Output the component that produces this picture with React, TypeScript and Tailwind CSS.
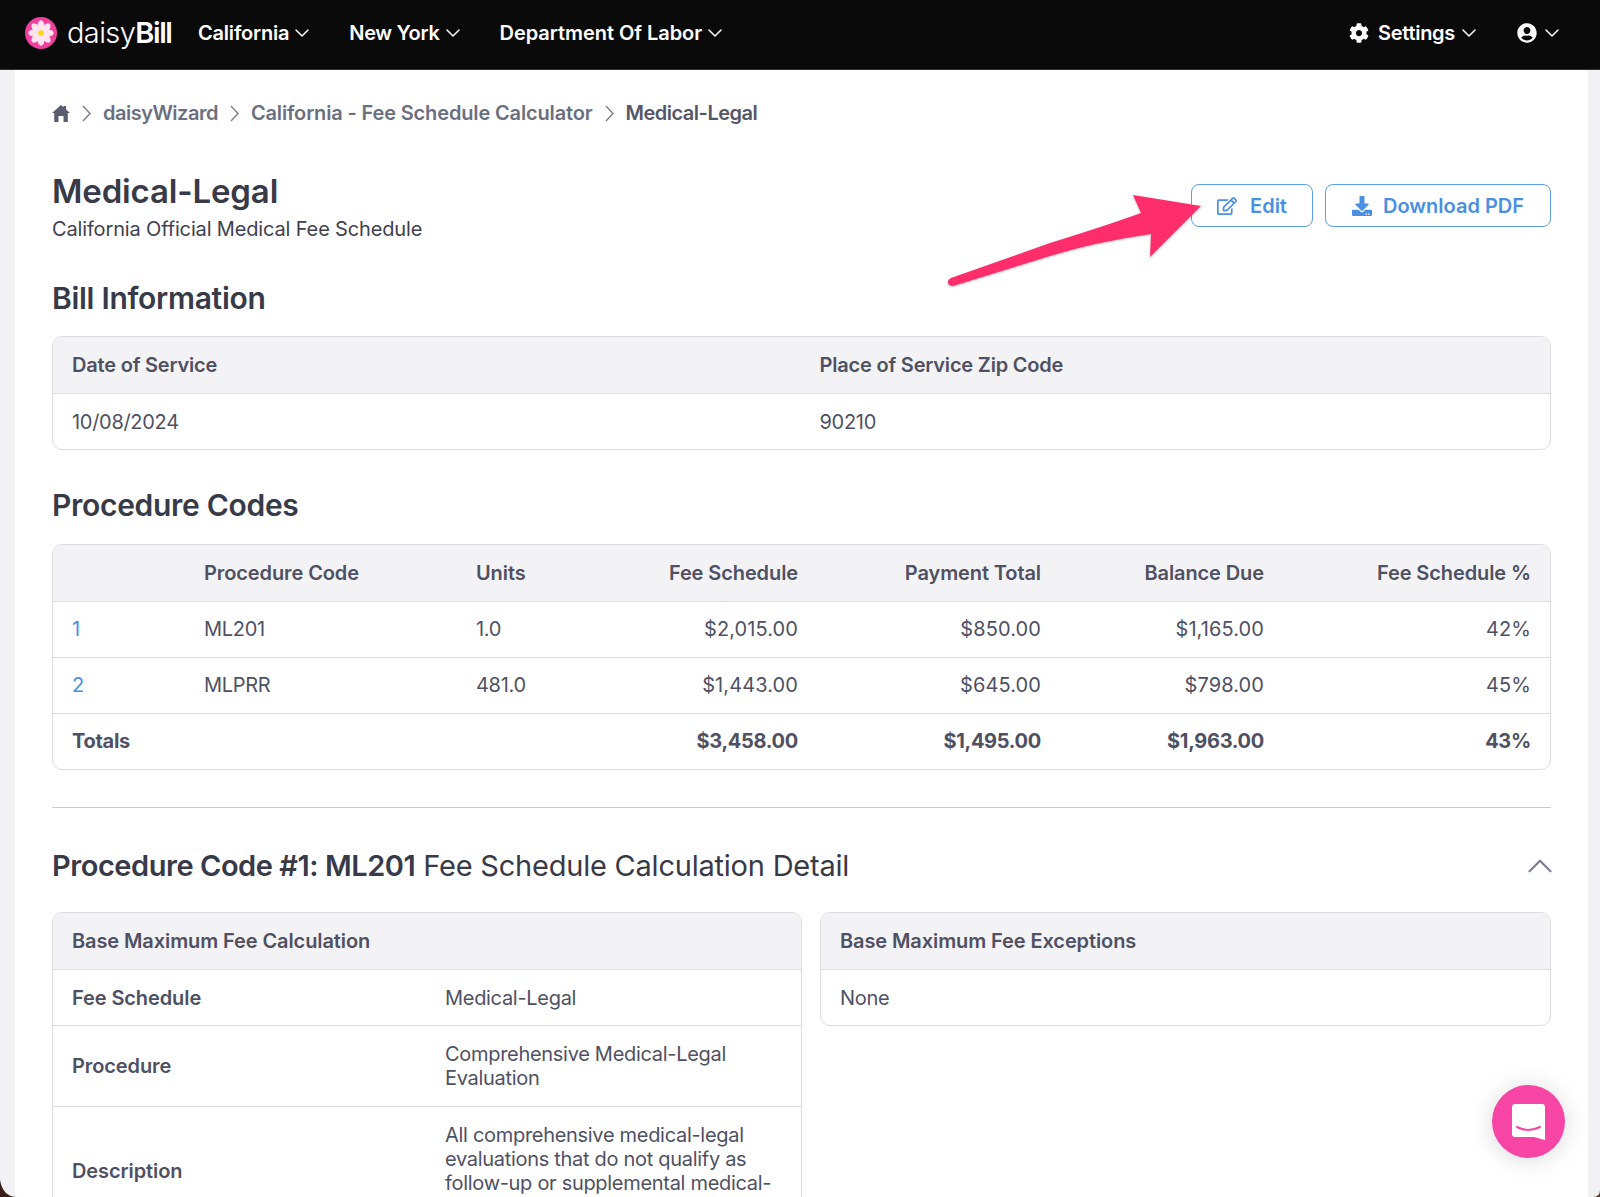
import React from "react";
import { ChevronDown, ChevronUp } from "lucide-react";
import { FaCog, FaUserCircle, FaRegEdit, FaDownload } from "react-icons/fa";

const Nav = ({ label, track }: { label: string; track: string }) => (
  <div className="flex items-center gap-[1px]">
    <span className={`text-[20px] font-semibold text-white ${track}`}>{label}</span>
    <ChevronDown size={24} className="text-white" strokeWidth={1.5} />
  </div>
);

const Sep = () => (
  <svg width="9" height="17" viewBox="0 0 9 17" className="mx-[12px] text-[#7b7f8e]" fill="none" stroke="currentColor" strokeWidth="1.4">
    <path d="M1 1l7 7.5-7 7.5" />
  </svg>
);

const Logo = () => (
  <svg width="32" height="32" viewBox="0 0 34 34">
    <circle cx="17" cy="17" r="17" fill="#f0409e" />
    {[0, 45, 90, 135, 180, 225, 270, 315].map((a) => (
      <ellipse key={a} cx="17" cy="9.5" rx="3.6" ry="6" fill="#fde4ee" transform={`rotate(${a} 17 17)`} />
    ))}
    <circle cx="17" cy="17" r="3" fill="#fbd914" />
  </svg>
);

const th = "px-[19px] h-[56px] font-semibold text-left align-middle tracking-[-0.1px]";
const td = "px-[19px] h-[56px] align-middle border-t border-[#dcdde3]";
const num = "tracking-[0.1px]";

const Card = ({ children }: { children: React.ReactNode }) => (
  <div className="border border-[#dcdde3] rounded-[10px] overflow-hidden bg-white">{children}</div>
);

const procRows = [
  ["1", "ML201", "1.0", "$2,015.00", "$850.00", "$1,165.00", "42%"],
  ["2", "MLPRR", "481.0", "$1,443.00", "$645.00", "$798.00", "45%"],
];

export default function App() {
  return (
    <div className="h-[1197px] overflow-hidden bg-[#f2f2f5] text-[#4f5163] text-[20px] leading-[24px] [font-family:Inter,sans-serif] tracking-[-0.3px] relative">
      <header className="h-[70px] bg-[#0a0a0a] border-b border-[#333] flex items-center pl-[25px] pr-[36px] pb-[3px]">
        <Logo />
        <div className="ml-[10px] w-[104px] text-[29px] leading-[36px] text-white font-light tracking-[-0.6px] whitespace-nowrap">
          daisy<span className="font-semibold tracking-[-1.4px]">Bill</span>
        </div>
        <div className="ml-[27px] flex items-center gap-[35px]">
          <Nav label="California" track="tracking-[-0.2px]" />
          <Nav label="New York" track="tracking-[-0.3px]" />
          <Nav label="Department Of Labor" track="tracking-[-0.05px]" />
        </div>
        <div className="ml-auto flex items-center gap-[36px]">
          <div className="flex items-center">
            <FaCog size={20} className="text-white mr-[9px]" />
            <span className="text-[20px] font-semibold text-white mr-[2px]">Settings</span>
            <ChevronDown size={24} className="text-white" strokeWidth={1.5} />
          </div>
          <div className="flex items-center gap-[3px]">
            <FaUserCircle size={20} className="text-white" />
            <ChevronDown size={24} className="text-white" strokeWidth={1.5} />
          </div>
        </div>
      </header>

      <main className="ml-[15px] mr-[12px] h-[1127px] bg-white px-[37px] overflow-hidden">
        <nav className="pt-[31px] h-[75px] flex items-start text-[#6b6f80] font-semibold">
          <div className="h-[24px] flex items-center">
            <svg width="18" height="17" viewBox="0 0 18 17" className="text-[#5a5d70]" fill="currentColor">
              <path d="M9 0l2.5 2.2V1H14v3.5L18 8h-2.2v9h-4.3v-6h-5v6H2.2V8H0z" />
            </svg>
            <Sep />
          </div>
          <span className="tracking-[-0.5px]">daisyWizard</span>
          <div className="h-[24px] flex items-center"><Sep /></div>
          <span className="tracking-[-0.15px]">California - Fee Schedule Calculator</span>
          <div className="h-[24px] flex items-center"><Sep /></div>
          <span className="text-[#555769] tracking-[-0.5px]">Medical-Legal</span>
        </nav>

        <div className="flex items-start justify-between h-[135px]">
          <div>
            <h1 className="mt-[26px] text-[33px] leading-[40px] font-semibold text-[#383a48] tracking-[-0.15px]">Medical-Legal</h1>
            <p className="text-[#3f4150] mt-[6px] tracking-[-0.15px]">California Official Medical Fee Schedule</p>
          </div>
          <div className="flex gap-[12px] mt-[39px] tracking-normal">
            <button className="h-[43px] w-[122px] border border-[#5b9fe6] rounded-[8px] text-[#4a90e2] font-semibold flex items-center justify-center gap-[13px]">
              <FaRegEdit size={20} />
              Edit
            </button>
            <button className="h-[43px] w-[226px] border border-[#5b9fe6] rounded-[8px] text-[#4a90e2] font-semibold flex items-center justify-center gap-[11px]">
              <FaDownload size={20} />
              Download PDF
            </button>
          </div>
        </div>

        <h2 className="text-[30px] leading-[36px] font-semibold text-[#383a48] mb-[20px]">Bill Information</h2>
        <Card>
          <div className="grid grid-cols-2 bg-[#f3f3f6] h-[56px] items-center font-semibold px-[19px] tracking-[-0.2px]">
            <div>Date of Service</div>
            <div className="pl-[18px]">Place of Service Zip Code</div>
          </div>
          <div className="grid grid-cols-2 h-[56px] items-center border-t border-[#dcdde3] px-[19px]">
            <div>10/08/2024</div>
            <div className="pl-[18px]">90210</div>
          </div>
        </Card>

        <h2 className="mt-[37px] text-[30px] leading-[36px] font-semibold text-[#383a48] mb-[21px]">Procedure Codes</h2>
        <Card>
          <table className="w-full border-collapse table-fixed">
            <colgroup>
              <col className="w-[132px]" />
              <col className="w-[272px]" />
              <col className="w-[180px]" />
              <col className="w-[180px]" />
              <col className="w-[243px]" />
              <col className="w-[223px]" />
              <col />
            </colgroup>
            <thead className="bg-[#f3f3f6]">
              <tr>
                <th className={th}></th>
                <th className={th}>Procedure Code</th>
                <th className={th}>Units</th>
                <th className={`${th} text-right`}>Fee Schedule</th>
                <th className={`${th} text-right`}>Payment Total</th>
                <th className={`${th} text-right`}>Balance Due</th>
                <th className={`${th} text-right`}>Fee Schedule %</th>
              </tr>
            </thead>
            <tbody>
              {procRows.map((r) => (
                <tr key={r[0]}>
                  <td className={`${td} text-[#4a90e2]`}>{r[0]}</td>
                  <td className={td}>{r[1]}</td>
                  <td className={td}>{r[2]}</td>
                  <td className={`${td} ${num} text-right`}>{r[3]}</td>
                  <td className={`${td} ${num} text-right`}>{r[4]}</td>
                  <td className={`${td} ${num} text-right`}>{r[5]}</td>
                  <td className={`${td} ${num} text-right`}>{r[6]}</td>
                </tr>
              ))}
              <tr className="font-bold">
                <td className={td} colSpan={3}>Totals</td>
                <td className={`${td} text-right`}>$3,458.00</td>
                <td className={`${td} text-right`}>$1,495.00</td>
                <td className={`${td} text-right`}>$1,963.00</td>
                <td className={`${td} text-right`}>43%</td>
              </tr>
            </tbody>
          </table>
        </Card>

        <hr className="mt-[37px] border-t border-[#c9cad1]" />

        <div className="mt-[40px] flex items-center justify-between h-[36px]">
          <h2 className="text-[29px] leading-[36px] text-[#383a48] tracking-[-0.22px]">
            <span className="font-semibold tracking-[-0.45px]">Procedure Code #1: ML201</span> Fee Schedule Calculation Detail
          </h2>
          <ChevronUp size={42} strokeWidth={1.3} className="text-[#7b7f95] -mr-[10px]" />
        </div>

        <div className="mt-[28px] grid grid-cols-[750px_1fr] gap-[18px] items-start">
          <Card>
            <div className="bg-[#f3f3f6] h-[56px] flex items-center px-[19px] font-semibold tracking-[-0.1px]">Base Maximum Fee Calculation</div>
            <div className="grid grid-cols-[373px_1fr] border-t border-[#dcdde3] h-[56px] items-center px-[19px]">
              <div className="font-semibold tracking-[-0.1px]">Fee Schedule</div>
              <div>Medical-Legal</div>
            </div>
            <div className="grid grid-cols-[373px_1fr] border-t border-[#dcdde3] h-[81px] items-center px-[19px]">
              <div className="font-semibold tracking-[-0.1px]">Procedure</div>
              <div>Comprehensive Medical-Legal Evaluation</div>
            </div>
            <div className="grid grid-cols-[373px_1fr] border-t border-[#dcdde3] h-[128px] items-center px-[19px]">
              <div className="font-semibold tracking-[-0.1px]">Description</div>
              <div>All comprehensive medical-legal evaluations that do not qualify as follow-up or supplemental medical-legal</div>
            </div>
          </Card>
          <Card>
            <div className="bg-[#f3f3f6] h-[56px] flex items-center px-[19px] font-semibold tracking-[-0.1px]">Base Maximum Fee Exceptions</div>
            <div className="border-t border-[#dcdde3] h-[56px] flex items-center px-[19px]">None</div>
          </Card>
        </div>
      </main>

      <svg className="absolute left-[945px] top-[190px] drop-shadow-[0_1px_1px_rgba(0,0,0,0.25)]" width="260" height="105" viewBox="0 0 260 105">
        <path d="M3 93Q2 90 6 88L105 53Q160 36 196 23L188 5L256 16L205 67L206 44Q150 52 105 66L8 96Q4 96 3 93Z" fill="#ff2d6b" />
      </svg>

      <div className="absolute left-[1492px] top-[1085px] w-[73px] h-[73px] rounded-full bg-[#f745a5] shadow-[0_2px_24px_rgba(0,0,0,0.15)] flex items-center justify-center">
        <svg width="33" height="36" viewBox="0 0 33 36">
          <path d="M3 0H30a3 3 0 0 1 3 3V36L22 33H3a3 3 0 0 1-3-3V3a3 3 0 0 1 3-3Z" fill="#fff" />
          <path d="M5 23Q16 29 28 23" stroke="#f745a5" strokeWidth="2" fill="none" strokeLinecap="round" />
        </svg>
      </div>

      <svg className="absolute left-0 top-[1180px]" width="17" height="17" viewBox="0 0 17 17">
        <path d="M0 0Q3 17 17 17H0Z" fill="#3a2018" />
      </svg>
      <svg className="absolute left-[1593px] top-[1190px]" width="7" height="7" viewBox="0 0 7 7">
        <path d="M7 0Q7 7 0 7H7Z" fill="#5a3a1c" />
      </svg>
    </div>
  );
}
